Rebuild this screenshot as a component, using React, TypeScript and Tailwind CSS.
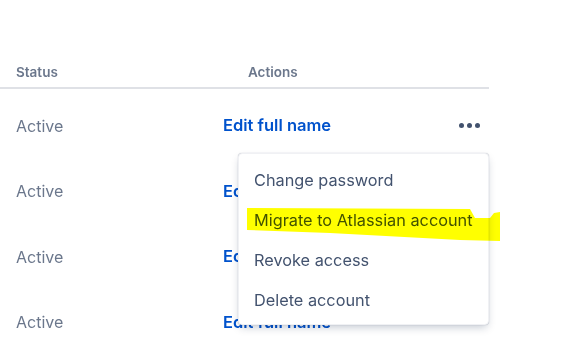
import React from "react";

const rows = ["Active", "Active", "Active", "Active"];
const menuItems = [
  "Change password",
  "Migrate to Atlassian account",
  "Revoke access",
  "Delete account",
];

export default function App() {
  return (
    <div
      className="relative w-[585px] h-[360px] overflow-hidden bg-white"
      style={{ fontFamily: "Inter, 'Noto Sans', sans-serif" }}
    >
      {/* Users table */}
      <div className="w-[489px] pt-[63px]">
        <div className="flex h-[26px] items-center border-b-[2px] border-[#dfe1e6] pb-[6px] text-[13.5px] font-semibold text-[#6b778c]">
          <div className="w-[248px] pl-[16px]">Status</div>
          <div>Actions</div>
        </div>
        <div className="mt-[4px]">
          {rows.map((status, i) => (
            <div key={i} className="flex h-[65.5px] items-center">
              <div className="w-[223px] pl-[16px] text-[16px] text-[#6b778c]">
                {status}
              </div>
              <div className="flex-1 text-[16.5px] font-semibold text-[#0052cc]">
                Edit full name
              </div>
              {i === 0 && (
                <div className="mr-[9px] flex gap-[3px]">
                  <span className="h-[5px] w-[5px] rounded-full bg-[#42526e]" />
                  <span className="h-[5px] w-[5px] rounded-full bg-[#42526e]" />
                  <span className="h-[5px] w-[5px] rounded-full bg-[#42526e]" />
                </div>
              )}
            </div>
          ))}
        </div>
      </div>

      {/* Dropdown menu */}
      <div className="absolute left-[238px] top-[153px] w-[251px] rounded-[4px] border border-[#f0f1f4] bg-white pb-[4px] pt-[6px] shadow-[0_4px_8px_-2px_rgba(9,30,66,0.25),0_0_1px_rgba(9,30,66,0.31)]">
        {menuItems.map((item) => (
          <div
            key={item}
            className="flex h-[40px] items-center px-[15px] text-[16.3px] text-[#42526e]"
          >
            {item}
          </div>
        ))}
      </div>

      {/* Highlighter annotation */}
      <svg
        className="pointer-events-none absolute left-0 top-0 mix-blend-multiply"
        width="585"
        height="360"
      >
        <polygon
          points="247,208 470,209 475,218 490,218 494,213 500,212 500,241 460,240 330,233 247,230"
          fill="#ffff00"
        />
      </svg>
    </div>
  );
}
